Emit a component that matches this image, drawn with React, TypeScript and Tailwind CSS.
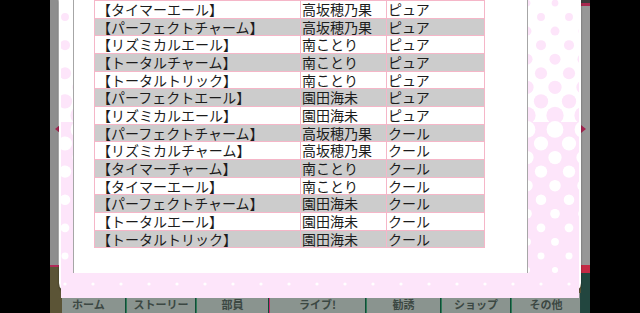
const rows: [string, string, string][] = [
  ['【タイマーエール】', '高坂穂乃果', 'ピュア'],
  ['【パーフェクトチャーム】', '高坂穂乃果', 'ピュア'],
  ['【リズミカルエール】', '南ことり', 'ピュア'],
  ['【トータルチャーム】', '南ことり', 'ピュア'],
  ['【トータルトリック】', '南ことり', 'ピュア'],
  ['【パーフェクトエール】', '園田海未', 'ピュア'],
  ['【リズミカルエール】', '園田海未', 'ピュア'],
  ['【パーフェクトチャーム】', '高坂穂乃果', 'クール'],
  ['【リズミカルチャーム】', '高坂穂乃果', 'クール'],
  ['【タイマーチャーム】', '南ことり', 'クール'],
  ['【タイマーエール】', '南ことり', 'クール'],
  ['【パーフェクトチャーム】', '園田海未', 'クール'],
  ['【トータルエール】', '園田海未', 'クール'],
  ['【トータルトリック】', '園田海未', 'クール'],
];

const tabs = [
  { label: 'ホーム', w: 'w-[63px] justify-start pl-[10px]' },
  { label: 'ストーリー', w: 'w-[68px] justify-center' },
  { label: '部員', w: 'w-[71px] justify-center' },
  { label: 'ライブ!', w: 'w-[95px] justify-center' },
  { label: '勧誘', w: 'w-[73px] justify-center' },
  { label: 'ショップ', w: 'w-[68px] justify-center' },
  { label: 'その他', w: 'w-[68px] justify-center' },
];

const PINK = '#fde5fa';

// halftone dots behind the popup panel
function Dots() {
  const pink: { x: number; y: number; r: number }[] = [];
  const white: { x: number; y: number; r: number }[] = [];
  for (let i = 0; i <= 20; i++) {
    const y = 3 + 14.05 * i;
    for (let j = 0; j < 38; j++) {
      const x = 4 + 14 * j;
      if (i <= 8 && j % 2 === (i + 1) % 2) {
        pink.push({ x, y, r: i === 8 ? 8.6 : 3.3 + 0.038 * y });
      }
      if (i >= 9 && j % 2 === i % 2) {
        let r = i === 9 ? 8.4 : 7.1 - 0.032 * (y - 143);
        if (i === 20) r = 1.6;
        white.push({ x, y, r });
      }
    }
  }
  return (
    <svg className="absolute inset-0" width="518" height="298">
      <rect x="0" y="0" width="518" height="298" fill="#ffffff" />
      {pink.map((d, k) => (
        <circle key={'p' + k} cx={d.x} cy={d.y} r={d.r} fill={PINK} />
      ))}
      <rect x="0" y="122" width="518" height="176" fill={PINK} />
      {white.map((d, k) => (
        <circle key={'w' + k} cx={d.x} cy={d.y} r={d.r} fill="#ffffff" />
      ))}
    </svg>
  );
}

export default function App() {
  return (
    <div
      className="flex h-[313px] w-[640px] overflow-hidden bg-black"
      style={{ fontFamily: '"Noto Sans CJK JP", "Noto Sans", sans-serif' }}
    >
      <div className="w-[50px] shrink-0" />

      {/* left strip of the game screen */}
      <div className="relative flex w-[9px] shrink-0 flex-col">
        <div className="h-[265px] border-r border-[#bdbdbd] bg-[#8e8e8e]" />
        <div className="h-[2px] bg-[#b02a58]" />
        <div className="flex-1 bg-[#5b5436]" />
        <div className="absolute left-[5px] top-[125px] h-0 w-0 border-y-[4px] border-r-[5px] border-y-transparent border-r-[#a3244f]" />
      </div>

      {/* centre column: popup + tab bar */}
      <div className="flex w-[522px] shrink-0 flex-col bg-[#5b5436]">
        <div className="relative z-10 h-[300px] rounded-b-[10px] border-x-2 border-b-2 border-white shadow-[0_1px_2px_rgba(0,0,0,0.45)]">
          <Dots />
          <div className="relative flex flex-col">
            <div className="flex h-[273px]">
              <div className="w-[12px]" />
              <div className="w-[455px] border-x border-[#a6a6a6] bg-white pl-[20px]">
                <div className="w-[391px] border-t border-[#f5b6c8] text-[14px] leading-[15px] text-[#1c1c1c]">
                  {rows.map((r, i) => (
                    <div
                      key={i}
                      className={`flex h-[17.68px] border-x border-b border-[#f5b6c8] ${i % 2 === 1 ? 'bg-[#cccccc]' : 'bg-white'}`}
                    >
                      <div className="flex w-[206px] items-center whitespace-nowrap border-r border-[#f5b6c8] pl-[2px]">{r[0]}</div>
                      <div className="flex w-[86px] items-center whitespace-nowrap border-r border-[#f5b6c8] pl-[1px]">{r[1]}</div>
                      <div className="flex flex-1 items-center whitespace-nowrap pl-[1px]">{r[2]}</div>
                    </div>
                  ))}
                </div>
              </div>
            </div>
          </div>
        </div>

        <div className="flex h-[20px]">
          <div className="w-[3px] bg-[#5b5436]" />
          {tabs.map((t, i) => (
            <div key={t.label} className="flex">
              {i > 0 && (
                <div className="flex w-[2px]">
                  <div className="w-[1px] bg-[#0f4d35]" />
                  <div className={`w-[1px] ${i === 3 ? 'bg-[#c02a70]' : 'bg-[#2f7a58]'}`} />
                </div>
              )}
              <div
                className={`flex ${t.w} bg-[#8a948f] pt-[4px] text-[11px] font-bold leading-[14px] text-[#3c4843]`}
              >
                {t.label}
              </div>
            </div>
          ))}
          <div className="flex-1 bg-[#244640]" />
        </div>
      </div>

      {/* right strip of the game screen */}
      <div className="relative flex w-[9px] shrink-0 flex-col">
        <div className="h-[3px] bg-[#3a3a3a]" />
        <div className="h-[3px] bg-[#a8284f]" />
        <div className="h-[259px] bg-[#979797]" />
        <div className="h-[8px] bg-[#c42a45]" />
        <div className="flex-1 bg-[#22463f]" />
        <div className="absolute left-0 top-[125px] h-0 w-0 border-y-[4px] border-l-[5px] border-y-transparent border-l-[#a3244f]" />
      </div>

      <div className="flex-1" />
    </div>
  );
}
